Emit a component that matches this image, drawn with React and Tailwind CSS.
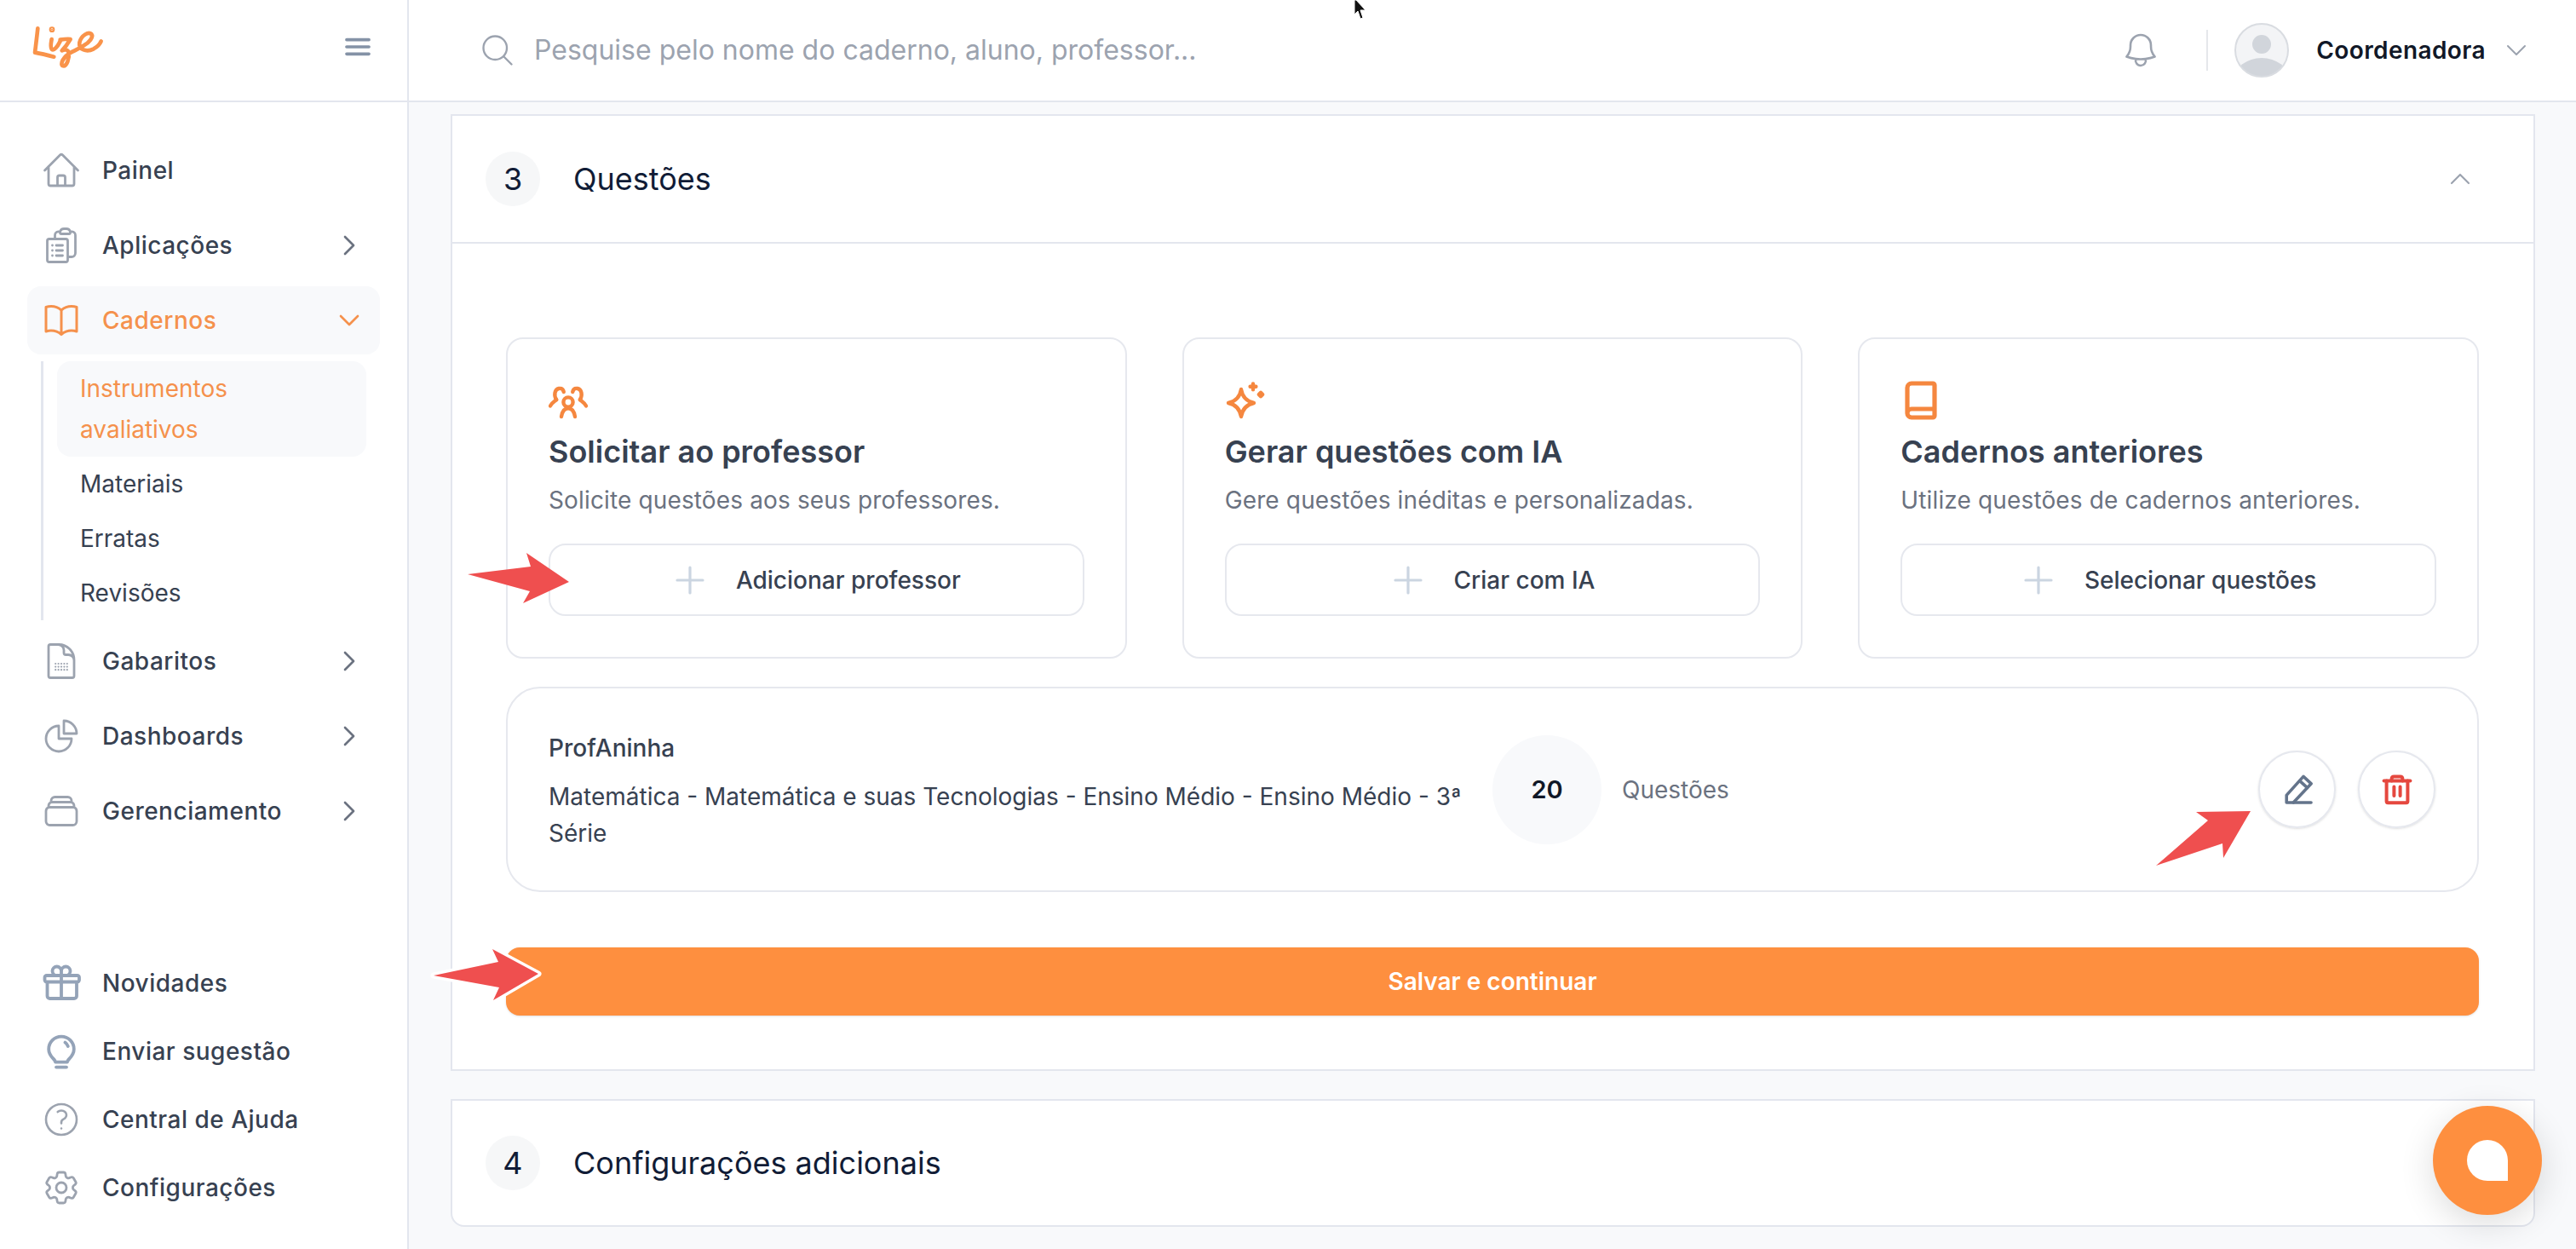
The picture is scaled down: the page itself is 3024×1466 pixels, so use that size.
import {
  HiOutlineHome,
  HiOutlineClipboardDocumentList,
  HiOutlineBookOpen,
  HiOutlineChartPie,
  HiOutlineRectangleStack,
  HiOutlineGift,
  HiOutlineQuestionMarkCircle,
  HiOutlineCog6Tooth,
  HiOutlineBars3,
  HiOutlineBell,
  HiOutlineMagnifyingGlass,
  HiOutlinePlus,
  HiOutlineChevronRight,
  HiOutlineChevronDown,
  HiOutlineChevronUp,
} from "react-icons/hi2"
import { Book } from "lucide-react"

function Logo() {
  return (
    <svg width="100" height="70" viewBox="0 0 300 210" fill="none" stroke="#f9934a" strokeWidth="14" strokeLinecap="round" strokeLinejoin="round">
      <path d="M43 40C40 70 36 100 33 125C60 130 80 135 100 140" />
      <circle cx="93" cy="44" r="3" fill="#f9934a" />
      <path d="M92 78C90 90 86 105 92 113C100 120 112 105 122 85" />
      <path d="M122 80C135 78 148 76 158 78C150 92 138 108 128 118C140 112 150 116 152 125C155 145 145 175 132 172C120 168 130 140 165 122C180 114 190 110 205 100C225 90 240 70 232 60C222 50 195 65 190 90C186 115 215 125 240 112C252 105 262 95 266 85" />
    </svg>
  )
}

function GabaritoIcon() {
  const dots = []
  for (const y of [13.5, 15.3, 17.1]) {
    for (const x of [8.6, 10.3, 12, 13.7, 15.4]) {
      dots.push(<circle key={x + "-" + y} cx={x} cy={y} r="0.55" fill="#9ca3af" stroke="none" />)
    }
  }
  return (
    <svg width="48" height="48" viewBox="0 0 24 24" fill="none" stroke="#9ca3af" strokeWidth="1.4" strokeLinecap="round" strokeLinejoin="round">
      <path d="M19.5 14.25v-2.625a3.375 3.375 0 0 0-3.375-3.375h-1.5A1.125 1.125 0 0 1 13.5 7.125v-1.5a3.375 3.375 0 0 0-3.375-3.375H8.25m2.25 0H5.625c-.621 0-1.125.504-1.125 1.125v17.25c0 .621.504 1.125 1.125 1.125h12.75c.621 0 1.125-.504 1.125-1.125V11.25a9 9 0 0 0-9-9Z" />
      {dots}
    </svg>
  )
}

function BulbIcon() {
  return (
    <svg width="48" height="48" viewBox="0 0 24 24" fill="none" stroke="#94a3b8" strokeWidth="1.9" strokeLinecap="round" strokeLinejoin="round">
      <path d="M8.5 18.3c0-1.8-3.9-3.2-3.9-7.6a7.4 7.4 0 0 1 14.8 0c0 4.4-3.9 5.8-3.9 7.6Z" />
      <path d="M9 21.3h6" />
      <path d="M14.2 6.8c.8.6 1.3 1.3 1.7 2.2" />
    </svg>
  )
}

function UsersIcon() {
  return (
    <svg width="48" height="48" viewBox="0 0 24 24" fill="none" stroke="#f5873f" strokeWidth="2.2" strokeLinecap="round" strokeLinejoin="round">
      <circle cx="11.5" cy="13" r="2.8" />
      <path d="M7.5 21.5C8 18.5 9.5 16.6 11.5 16.6C13.5 16.6 15 18.5 15.5 21.5" />
      <path d="M4.5 11.5C3 9 3.5 5.5 6 5C7.6 4.7 8.6 5.6 8.9 7" />
      <path d="M4.6 11.6C3.4 12.6 1.8 13.5 1 15.2" />
      <path d="M18.5 11.5C20 9 19.5 5.5 17 5C15.4 4.7 14.4 5.6 14.1 7" />
      <path d="M18.4 11.6C19.6 12.6 21.2 13.5 22 15.2" />
    </svg>
  )
}

function SparkleIcon() {
  return (
    <svg width="48" height="48" viewBox="0 0 24 24" fill="none" stroke="#f5873f" strokeWidth="2.2" strokeLinecap="round" strokeLinejoin="round">
      <path d="M9.5 5.5C10.2 9.8 13 12.6 17 13.5C13 14.4 10.2 17.2 9.5 21.5C8.8 17.2 6 14.4 2 13.5C6 12.6 8.8 9.8 9.5 5.5Z" />
      <path d="M16.5 2.2v3.4M14.8 3.9h3.4" />
      <path d="M21 7.4l1.1 1.1L21 9.6l-1.1-1.1Z" fill="#f5873f" />
    </svg>
  )
}

function EditIcon() {
  return (
    <svg width="48" height="48" viewBox="0 0 24 24" fill="none" stroke="#64748b" strokeWidth="1.8" strokeLinecap="round" strokeLinejoin="round">
      <path d="M15.5 4.2l4.6 4.2L9.6 19.5H5.6V15.2Z" />
      <path d="M13.4 6.8l4.4 4" />
      <path d="M9.6 19.5H20" />
    </svg>
  )
}

function TrashIcon() {
  return (
    <svg width="48" height="48" viewBox="0 0 24 24" fill="none" stroke="#e5483f" strokeWidth="2" strokeLinecap="round" strokeLinejoin="round">
      <path d="M4.3 6.8h15.4" />
      <path d="M8.8 6.8V5.6c0-.9.6-1.4 1.4-1.4h3.6c.8 0 1.4.5 1.4 1.4v1.2" />
      <path d="M5.8 6.8v12c0 .5.3.8.8.8h10.8c.5 0 .8-.3.8-.8v-12" />
      <path d="M10.2 10.3v5.2M13.8 10.3v5.2" />
    </svg>
  )
}

function Avatar() {
  return (
    <svg width="64" height="64" viewBox="0 0 64 64">
      <defs>
        <clipPath id="avatar-clip">
          <circle cx="32" cy="32" r="31" />
        </clipPath>
      </defs>
      <circle cx="32" cy="32" r="31" fill="#f3f4f6" />
      <g clipPath="url(#avatar-clip)">
        <ellipse cx="32" cy="25" rx="11" ry="11" fill="#d1d5db" />
        <ellipse cx="32" cy="66" rx="32" ry="25" fill="#d1d5db" />
      </g>
      <circle cx="32" cy="32" r="31" fill="none" stroke="#d9dce1" strokeWidth="2" />
    </svg>
  )
}

function NavItem({ icon, label, chevron, active }) {
  return (
    <div className={active ? "flex h-20 items-center rounded-2xl bg-[#f8f9fb] pl-4 pr-5" : "flex h-20 items-center rounded-2xl pl-4 pr-5"}>
      <span className="flex w-12 justify-center">{icon}</span>
      <span className={active ? "ml-6 text-[28px] font-medium tracking-[0.5px] text-[#f5914c]" : "ml-6 text-[28px] font-medium tracking-[0.5px] text-[#374151]"}>
        {label}
      </span>
      {chevron === "right" && <HiOutlineChevronRight size={32} strokeWidth={2} className="ml-auto text-[#6b7280]" />}
      {chevron === "down" && <HiOutlineChevronDown size={32} strokeWidth={2} className="ml-auto text-[#f5914c]" />}
    </div>
  )
}

function Sidebar() {
  const grayIcon = "text-[#9ca3af]"
  const slateIcon = "text-[#94a3b8]"
  return (
    <aside className="flex w-[480px] shrink-0 flex-col border-r-2 border-[#e3e6ee] bg-white pb-8">
      <div className="flex h-[120px] shrink-0 items-center border-b-2 border-[#e3e6ee] pb-[8px] pl-[30px] pr-[39px]">
        <Logo />
        <HiOutlineBars3 size={38} strokeWidth={2.3} className="ml-auto text-[#8492a6]" />
      </div>
      <nav className="flex flex-col gap-2 px-8 pt-10">
        <NavItem icon={<HiOutlineHome size={48} strokeWidth={1.4} className={grayIcon} />} label="Painel" />
        <NavItem icon={<HiOutlineClipboardDocumentList size={48} strokeWidth={1.4} className={grayIcon} />} label="Aplicações" chevron="right" />
        <NavItem icon={<HiOutlineBookOpen size={48} strokeWidth={1.5} className="text-[#f5914c]" />} label="Cadernos" chevron="down" active />
        <ul className="ml-4 mr-4 flex flex-col border-l-[3px] border-[#e3e6ee] pl-4 text-[28px] leading-[48px] text-[#374151]">
          <li className="rounded-2xl bg-[#f8f9fb] py-2 pl-[27px] pr-10 text-[#f5914c]">Instrumentos avaliativos</li>
          <li className="py-2 pl-[27px]">Materiais</li>
          <li className="py-2 pl-[27px]">Erratas</li>
          <li className="py-2 pl-[27px]">Revisões</li>
        </ul>
        <NavItem icon={<GabaritoIcon />} label="Gabaritos" chevron="right" />
        <NavItem icon={<HiOutlineChartPie size={48} strokeWidth={1.4} className={grayIcon} />} label="Dashboards" chevron="right" />
        <NavItem icon={<HiOutlineRectangleStack size={48} strokeWidth={1.4} className={grayIcon} />} label="Gerenciamento" chevron="right" />
      </nav>
      <div className="mt-auto flex flex-col px-8">
        <NavItem icon={<HiOutlineGift size={48} strokeWidth={1.9} className={slateIcon} />} label="Novidades" />
        <NavItem icon={<BulbIcon />} label="Enviar sugestão" />
        <NavItem icon={<HiOutlineQuestionMarkCircle size={48} strokeWidth={1.3} className={grayIcon} />} label="Central de Ajuda" />
        <NavItem icon={<HiOutlineCog6Tooth size={48} strokeWidth={1.4} className={grayIcon} />} label="Configurações" />
      </div>
    </aside>
  )
}

function Topbar() {
  return (
    <header className="flex h-[120px] shrink-0 items-center border-b-2 border-[#e3e6ee] bg-white pl-[82px] pr-[54px]">
      <HiOutlineMagnifyingGlass size={44} strokeWidth={1.3} className="text-[#9ca3af]" />
      <input
        className="ml-[21px] w-[1100px] bg-transparent text-[32px] text-[#374151] outline-none placeholder:text-[#9ca3af]"
        placeholder="Pesquise pelo nome do caderno, aluno, professor..."
      />
      <HiOutlineBell size={48} strokeWidth={1.3} className="ml-auto text-[#9ca3af]" />
      <span className="ml-[53px] h-12 w-[2px] bg-[#e5e7eb]" />
      <span className="ml-[31px]">
        <Avatar />
      </span>
      <span className="ml-8 text-[28px] font-semibold tracking-[0.4px] text-[#111827]">Coordenadora</span>
      <HiOutlineChevronDown size={32} strokeWidth={1.5} className="ml-5 text-[#9ca3af]" />
    </header>
  )
}

function SectionHeader({ number, title, children }) {
  return (
    <div className="flex items-center pl-[39px] pr-[70px]">
      <span className="flex h-16 w-16 items-center justify-center rounded-full bg-[#f6f7f8] text-[36px] text-[#111c36]">{number}</span>
      <span className="ml-[39px] text-[36px] text-[#111c36]">{title}</span>
      {children}
    </div>
  )
}

function ActionCard({ icon, title, text, action }) {
  return (
    <div className="rounded-[20px] border-2 border-[#e6e8ee] bg-white p-12">
      <div className="h-12">{icon}</div>
      <h3 className="mt-2 text-[36px] font-semibold leading-[56px] text-[#374151]">{title}</h3>
      <p className="mt-[9px] text-[28px] leading-10 tracking-[0.14px] text-[#6b7280]">{text}</p>
      <button className="mt-[31px] flex h-[85px] w-full items-center justify-center gap-[30px] rounded-[20px] border-2 border-[#e6e8ee] pr-[3px] text-[28px] font-medium text-[#374151]">
        <HiOutlinePlus size={48} strokeWidth={1.6} className="text-[#cbd5e1]" />
        {action}
      </button>
    </div>
  )
}

function RequestRow() {
  return (
    <div className="mt-[33px] flex h-[241px] items-center rounded-[40px] border-2 border-[#e6e8ee] bg-white pl-12 pr-[49px]">
      <div className="w-[1080px] pt-1 text-[28px] text-[#374151]">
        <div className="font-medium leading-[42px]">ProfAninha</div>
        <div className="mt-[15px] leading-[43px]">Matemática - Matemática e suas Tecnologias - Ensino Médio - Ensino Médio - 3ª Série</div>
      </div>
      <span className="ml-7 flex h-32 w-32 items-center justify-center rounded-full bg-[#f8f9fb] text-[29px] font-semibold text-[#111827]">20</span>
      <span className="ml-6 text-[28px] text-[#6b7280]">Questões</span>
      <div className="ml-auto flex gap-[26px]">
        <button className="flex h-[91px] w-[91px] items-center justify-center rounded-full border-2 border-[#e6e8ee] shadow-sm">
          <EditIcon />
        </button>
        <button className="flex h-[91px] w-[91px] items-center justify-center rounded-full border-2 border-[#e6e8ee] shadow-sm">
          <TrashIcon />
        </button>
      </div>
    </div>
  )
}

function Arrows() {
  return (
    <svg className="pointer-events-none absolute left-0 top-0" width="3024" height="1466" viewBox="0 0 3024 1466">
      <polygon points="549,674 623,665 618,649 668,683 614,708 622,694" fill="#ef4f4f" />
      <polygon points="2531,1016 2592,963 2578,953 2642,952 2610,1007 2609,990" fill="#ef4f4f" />
      <polygon points="509,1145 585,1129 578,1114 632,1143 579,1174 586,1159" fill="#ef4f4f" stroke="#ffffff" strokeWidth="7" strokeLinejoin="round" paintOrder="stroke" />
      <path d="M1590 0v17l4-4 3 9 3-1-3-9h6L1592 0Z" fill="#111111" stroke="#ffffff" strokeWidth="1" />
    </svg>
  )
}

export default function App() {
  return (
    <div className="relative flex h-screen w-full overflow-hidden bg-[#f8f9fb] font-['Inter',sans-serif]">
      <Sidebar />
      <main className="flex min-w-0 flex-1 flex-col">
        <Topbar />
        <div className="flex flex-col pl-[49px] pr-[48px] pt-[14px]">
          <section className="border-2 border-[#e3e6ee] bg-white">
            <div className="flex h-[150px] items-center border-b-2 border-[#e3e6ee]">
              <div className="w-full">
                <SectionHeader number="3" title="Questões">
                  <HiOutlineChevronUp size={32} strokeWidth={1.6} className="ml-auto text-[#9ca3af]" />
                </SectionHeader>
              </div>
            </div>
            <div className="pb-[63px] pl-[63px] pr-16 pt-[110px]">
              <div className="grid grid-cols-3 gap-[65px]">
                <ActionCard icon={<UsersIcon />} title="Solicitar ao professor" text="Solicite questões aos seus professores." action="Adicionar professor" />
                <ActionCard icon={<SparkleIcon />} title="Gerar questões com IA" text="Gere questões inéditas e personalizadas." action="Criar com IA" />
                <ActionCard icon={<Book size={48} strokeWidth={2.6} color="#f5873f" />} title="Cadernos anteriores" text="Utilize questões de cadernos anteriores." action="Selecionar questões" />
              </div>
              <RequestRow />
              <button className="mt-[65px] h-20 w-full rounded-2xl bg-[#fe8f3f] text-[28px] font-semibold text-white shadow-sm">Salvar e continuar</button>
            </div>
          </section>
          <section className="mt-[33px] flex h-[150px] items-center rounded-b-2xl border-2 border-[#e3e6ee] bg-white">
            <div className="w-full">
              <SectionHeader number="4" title="Configurações adicionais" />
            </div>
          </section>
        </div>
      </main>
      <Arrows />
      <button className="absolute left-[2856px] top-[1298px] flex h-32 w-32 items-center justify-center rounded-full bg-[#fe8f3f] shadow-[0_10px_40px_rgba(0,0,0,0.14)]">
        <span className="h-12 w-12 rounded-t-full rounded-bl-full bg-white" />
      </button>
    </div>
  )
}
